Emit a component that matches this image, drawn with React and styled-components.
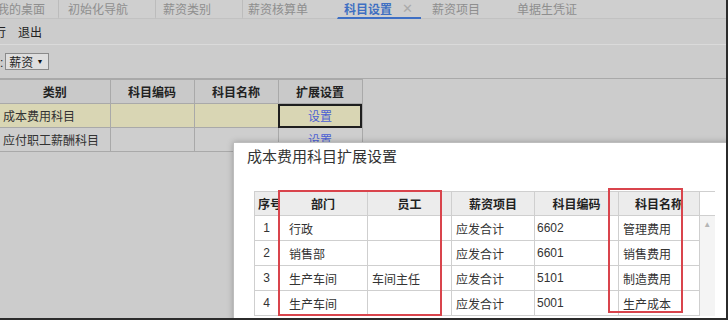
import React from "react";
import styled, { createGlobalStyle } from "styled-components";

const Global = createGlobalStyle`
  html, body { margin: 0; padding: 0; background: #cdcdcd; }
  body { font-family: "Liberation Sans", "Noto Sans CJK SC", sans-serif; font-size: 12px; color: #333; }
`;

const Frame = styled.div`
  position: relative;
  width: 728px;
  height: 320px;
  box-sizing: border-box;
  border-right: 2px solid #2b2b2b;
  border-bottom: 2px solid #2b2b2b;
  overflow: hidden;
  background: #cccccc;
  display: flex;
  flex-direction: column;
`;

const TabBar = styled.div`
  display: flex;
  height: 18px;
  background: #cfcfcf;
  border-bottom: 1px solid #c2c2c2;
  margin-left: -12px;
  flex-shrink: 0;
`;

const Tab = styled.div`
  position: relative;
  width: ${(p) => p.$w}px;
  padding-left: ${(p) => p.$pl}px;
  box-sizing: border-box;
  display: flex;
  align-items: center;
  gap: 10px;
  font-size: 12px;
  white-space: nowrap;
  color: ${(p) => (p.$active ? "#3f6fc2" : "#8e8e8e")};
  font-weight: ${(p) => (p.$active ? 700 : 400)};
  border-left: ${(p) => (p.$sep ? "1px solid #bcbcbc" : "1px solid transparent")};
  border-bottom: ${(p) => (p.$active ? "2px solid #3e6fc4" : "2px solid transparent")};
  margin-bottom: -1px;
`;

const Close = styled.span`
  color: #aaaaaa;
  font-weight: 400;
  font-size: 13px;
`;

const Toolbar = styled.div`
  display: flex;
  gap: 12px;
  align-items: center;
  height: 25px;
  margin-left: -18px;
  border-bottom: 1px solid #dadada;
  font-size: 12px;
  color: #222;
  flex-shrink: 0;
`;

const FilterBar = styled.div`
  display: flex;
  align-items: center;
  gap: 2px;
  height: 33px;
  margin-left: -24px;
  border-bottom: 1px solid #a9a9a9;
  font-size: 12px;
  color: #222;
  flex-shrink: 0;
`;

const Select = styled.div`
  width: 44px;
  height: 17px;
  box-sizing: border-box;
  border: 1px solid #8a8a8a;
  background: #dedede;
  display: flex;
  align-items: center;
  justify-content: space-between;
  padding: 0 5px 0 3px;
  font-size: 12px;
`;

const Arrow = styled.span`
  font-size: 7px;
  color: #111;
`;

const Grid = styled.table`
  border-collapse: collapse;
  width: 362px;
  table-layout: fixed;
`;

const GH = styled.th`
  height: 23px;
  background: #c9c9c9;
  border: 1px solid #a9a9a9;
  border-left: ${(p) => (p.$first ? "none" : "1px solid #a9a9a9")};
  font-weight: 700;
  color: #222;
  font-size: 12px;
  text-align: center;
  padding: 0;
`;

const GRow = styled.tr`
  background: ${(p) => (p.$sel ? "#d9d6b4" : "#cecece")};
`;

const GD = styled.td`
  height: 23px;
  border: 1px solid #a9a9a9;
  border-left: ${(p) => (p.$first ? "none" : "1px solid #a9a9a9")};
  padding: 0 3px;
  font-size: 12px;
  color: #333;
  white-space: nowrap;
  overflow: hidden;
  text-align: ${(p) => (p.$center ? "center" : "left")};
  ${(p) => (p.$focus ? "outline: 2px solid #1e1e1e; outline-offset: -2px;" : "")}
`;

const Link = styled.span`
  color: #4b5fd4;
`;

const Modal = styled.div`
  position: absolute;
  left: 233px;
  top: 142px;
  width: 520px;
  height: 200px;
  background: #ffffff;
  border: 1px solid #bdbdbd;
  box-shadow: 0 0 6px rgba(0, 0, 0, 0.25);
  display: flex;
  flex-direction: column;
`;

const Title = styled.div`
  padding: 1px 0 0 13px;
  height: 26px;
  line-height: 24px;
  font-size: 15px;
  color: #333;
  font-family: "Noto Sans CJK SC", sans-serif;
`;

const Body = styled.div`
  padding: 21px 0 0 20px;
`;

const Table = styled.table`
  border-collapse: collapse;
  table-layout: fixed;
  width: 460px;
`;

const TH = styled.th`
  height: 23px;
  background: #ececec;
  border: 1px solid #cfcfcf;
  font-weight: 700;
  font-size: 12px;
  color: #222;
  padding: 0 ${(p) => (p.$left ? "3px" : "0")};
  text-align: ${(p) => (p.$left ? "left" : "center")};
  white-space: nowrap;
  overflow: hidden;
`;

const THBlank = styled.th`
  background: #ffffff;
  border: 1px solid #cfcfcf;
  border-right: none;
`;

const TD = styled.td`
  height: 24px;
  border: 1px solid #cfcfcf;
  font-size: 12px;
  color: #333;
  white-space: nowrap;
  overflow: hidden;
  padding: 0 0 0 ${(p) => p.$pl ?? 4}px;
  text-align: ${(p) => (p.$center ? "center" : "left")};
`;

const ScrollCell = styled.td`
  background: #f4f4f4;
  border-left: 1px solid #cfcfcf;
  vertical-align: top;
  text-align: center;
  color: #b5b5b5;
  font-size: 8px;
  padding-top: 4px;
`;

const Mark = styled.div`
  position: absolute;
  left: ${(p) => p.$x}px;
  top: ${(p) => p.$y}px;
  width: ${(p) => p.$w}px;
  height: ${(p) => p.$h}px;
  box-sizing: border-box;
  border: 2.5px solid #d9444c;
  pointer-events: none;
`;

const tabs = [
  { t: "我的桌面", w: 70, pl: 8 },
  { t: "初始化导航", w: 97, pl: 9, sep: true },
  { t: "薪资类别", w: 87, pl: 7, sep: true },
  { t: "薪资核算单", w: 95, pl: 5, sep: true },
  { t: "科目设置", w: 84, pl: 6, active: true },
  { t: "薪资项目", w: 85, pl: 10 },
  { t: "单据生凭证", w: 120, pl: 10 },
];

const rows = [
  ["1", "行政", "", "应发合计", "6602", "管理费用"],
  ["2", "销售部", "", "应发合计", "6601", "销售费用"],
  ["3", "生产车间", "车间主任", "应发合计", "5101", "制造费用"],
  ["4", "生产车间", "", "应发合计", "5001", "生产成本"],
];

export default function App() {
  return (
    <>
      <Global />
      <Frame>
        <TabBar>
          {tabs.map((tb) => (
            <Tab key={tb.t} $w={tb.w} $pl={tb.pl} $sep={tb.sep} $active={tb.active}>
              {tb.t}
              {tb.active && <Close>✕</Close>}
            </Tab>
          ))}
        </TabBar>
        <Toolbar>
          <span>执行</span>
          <span>退出</span>
        </Toolbar>
        <FilterBar>
          <span>类别:</span>
          <Select>
            <span>薪资</span>
            <Arrow>▼</Arrow>
          </Select>
        </FilterBar>
        <Grid>
          <colgroup>
            <col style={{ width: 110 }} />
            <col style={{ width: 84 }} />
            <col style={{ width: 84 }} />
            <col style={{ width: 84 }} />
          </colgroup>
          <thead>
            <tr>
              <GH $first>类别</GH>
              <GH>科目编码</GH>
              <GH>科目名称</GH>
              <GH>扩展设置</GH>
            </tr>
          </thead>
          <tbody>
            <GRow $sel>
              <GD $first>成本费用科目</GD>
              <GD />
              <GD />
              <GD $center $focus>
                <Link>设置</Link>
              </GD>
            </GRow>
            <GRow>
              <GD $first>应付职工薪酬科目</GD>
              <GD />
              <GD />
              <GD $center>
                <Link>设置</Link>
              </GD>
            </GRow>
          </tbody>
        </Grid>

        <Modal>
          <Title>成本费用科目扩展设置</Title>
          <Body>
            <Table>
              <colgroup>
                <col style={{ width: 24 }} />
                <col style={{ width: 89 }} />
                <col style={{ width: 84 }} />
                <col style={{ width: 83 }} />
                <col style={{ width: 84 }} />
                <col style={{ width: 81 }} />
                <col style={{ width: 15 }} />
              </colgroup>
              <thead>
                <tr>
                  <TH $left>序号</TH>
                  <TH>部门</TH>
                  <TH>员工</TH>
                  <TH>薪资项目</TH>
                  <TH>科目编码</TH>
                  <TH>科目名称</TH>
                  <THBlank />
                </tr>
              </thead>
              <tbody>
                {rows.map((r, i) => (
                  <tr key={r[0]}>
                    <TD $center $pl={0}>{r[0]}</TD>
                    <TD $pl={10}>{r[1]}</TD>
                    <TD>{r[2]}</TD>
                    <TD>{r[3]}</TD>
                    <TD $pl={2}>{r[4]}</TD>
                    <TD>{r[5]}</TD>
                    {i === 0 && <ScrollCell rowSpan={4}>▲</ScrollCell>}
                  </tr>
                ))}
              </tbody>
            </Table>
          </Body>
          <Mark $x={44} $y={47} $w={164} $h={126} />
          <Mark $x={374} $y={45} $w={75} $h={125} />
        </Modal>
      </Frame>
    </>
  );
}
